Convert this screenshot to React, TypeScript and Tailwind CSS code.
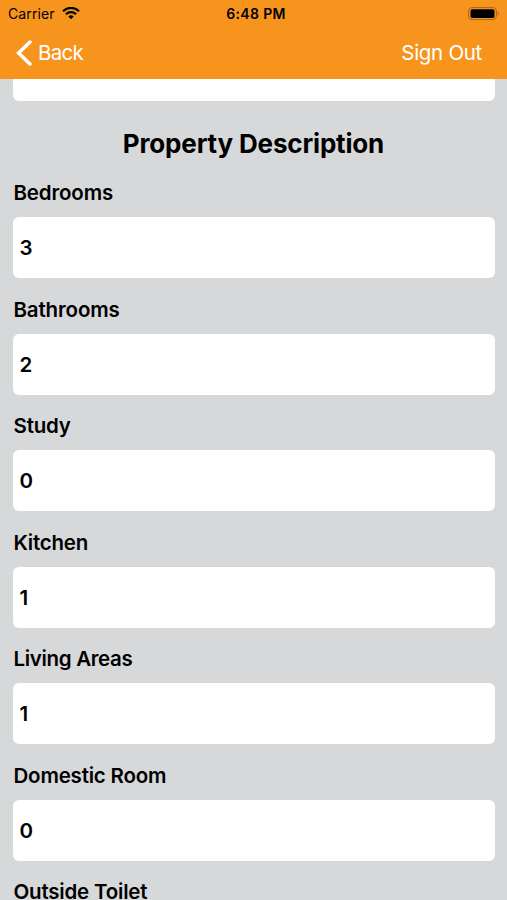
const fields = [
  { label: "Bedrooms", value: "3", tracking: "tracking-[-0.15px]" },
  { label: "Bathrooms", value: "2", tracking: "tracking-[-0.15px]" },
  { label: "Study", value: "0", tracking: "tracking-[-0.2px]" },
  { label: "Kitchen", value: "1", tracking: "tracking-[-0.25px]" },
  { label: "Living Areas", value: "1", tracking: "tracking-[-0.32px]" },
  { label: "Domestic Room", value: "0", tracking: "tracking-[-0.2px]" },
  { label: "Outside Toilet", value: "", tracking: "tracking-[-0.2px]" },
];

export default function App() {
  return (
    <div className="h-[900px] w-[507px] overflow-hidden bg-[#d7d8da] font-[Inter,sans-serif] text-black">
      <header className="h-[79px] bg-[#f7941e]">
        <div className="grid h-[27px] grid-cols-3 items-center pl-[8px] pr-[7px] text-[14px]">
          <div className="flex items-center gap-[7px]">
            <span className="tracking-[0.1px]">Carrier</span>
            <svg width="18" height="13" viewBox="0 0 18 13" fill="none" stroke="black" strokeWidth="2.2">
              <path d="M1 4.2a11.3 11.3 0 0 1 16 0" />
              <path d="M3.9 7.2a7.2 7.2 0 0 1 10.2 0" />
              <path d="M9 12.2 6.3 9.5a3.8 3.8 0 0 1 5.4 0Z" fill="black" stroke="none" />
            </svg>
          </div>
          <span className="pl-[4px] text-center font-semibold tracking-[0.35px]">6:48 PM</span>
          <svg className="justify-self-end" width="32" height="14" viewBox="0 0 32 14">
            <rect x=".6" y=".6" width="27.8" height="12" rx="3.4" fill="none" stroke="#a8651a" />
            <rect x="2.5" y="2.2" width="24" height="8.8" rx="1.8" />
            <path d="M29.7 4.5q2 2.1 0 4.2Z" fill="#a8651a" />
          </svg>
        </div>
        <div className="flex h-[51px] items-center justify-between pl-[16px] pr-[25px] text-[20.5px] text-white">
          <div className="flex items-center gap-[5px]">
            <svg width="17" height="26" viewBox="0 0 17 26" fill="none" stroke="white" strokeWidth="3.5" strokeLinecap="round">
              <path d="M14 2 2.6 13 14 24" />
            </svg>
            <span className="pt-[2px] tracking-[-0.7px]">Back</span>
          </div>
          <span className="pt-[2px] tracking-[-0.3px]">Sign Out</span>
        </div>
      </header>
      <main className="px-[13px]">
        <div className="h-[21.5px] w-[482px] rounded-b-[6px] bg-white" />
        <h1 className="mt-[26.5px] h-[34px] text-center text-[26px] font-bold leading-[34px] tracking-[-0.17px]">Property Description</h1>
        <div className="mt-[18px]">
          {fields.map((field) => (
            <section key={field.label} className="h-[116.5px]">
              <h2 className={`h-[38px] pl-[0.5px] text-[20.5px] font-semibold leading-[28px] ${field.tracking}`}>{field.label}</h2>
              {field.value && (
                <div className="flex h-[61px] w-[482px] items-center rounded-[6px] bg-white pl-[6.5px] pt-[2px] text-[20.5px] font-semibold">
                  {field.value}
                </div>
              )}
            </section>
          ))}
        </div>
      </main>
    </div>
  );
}
